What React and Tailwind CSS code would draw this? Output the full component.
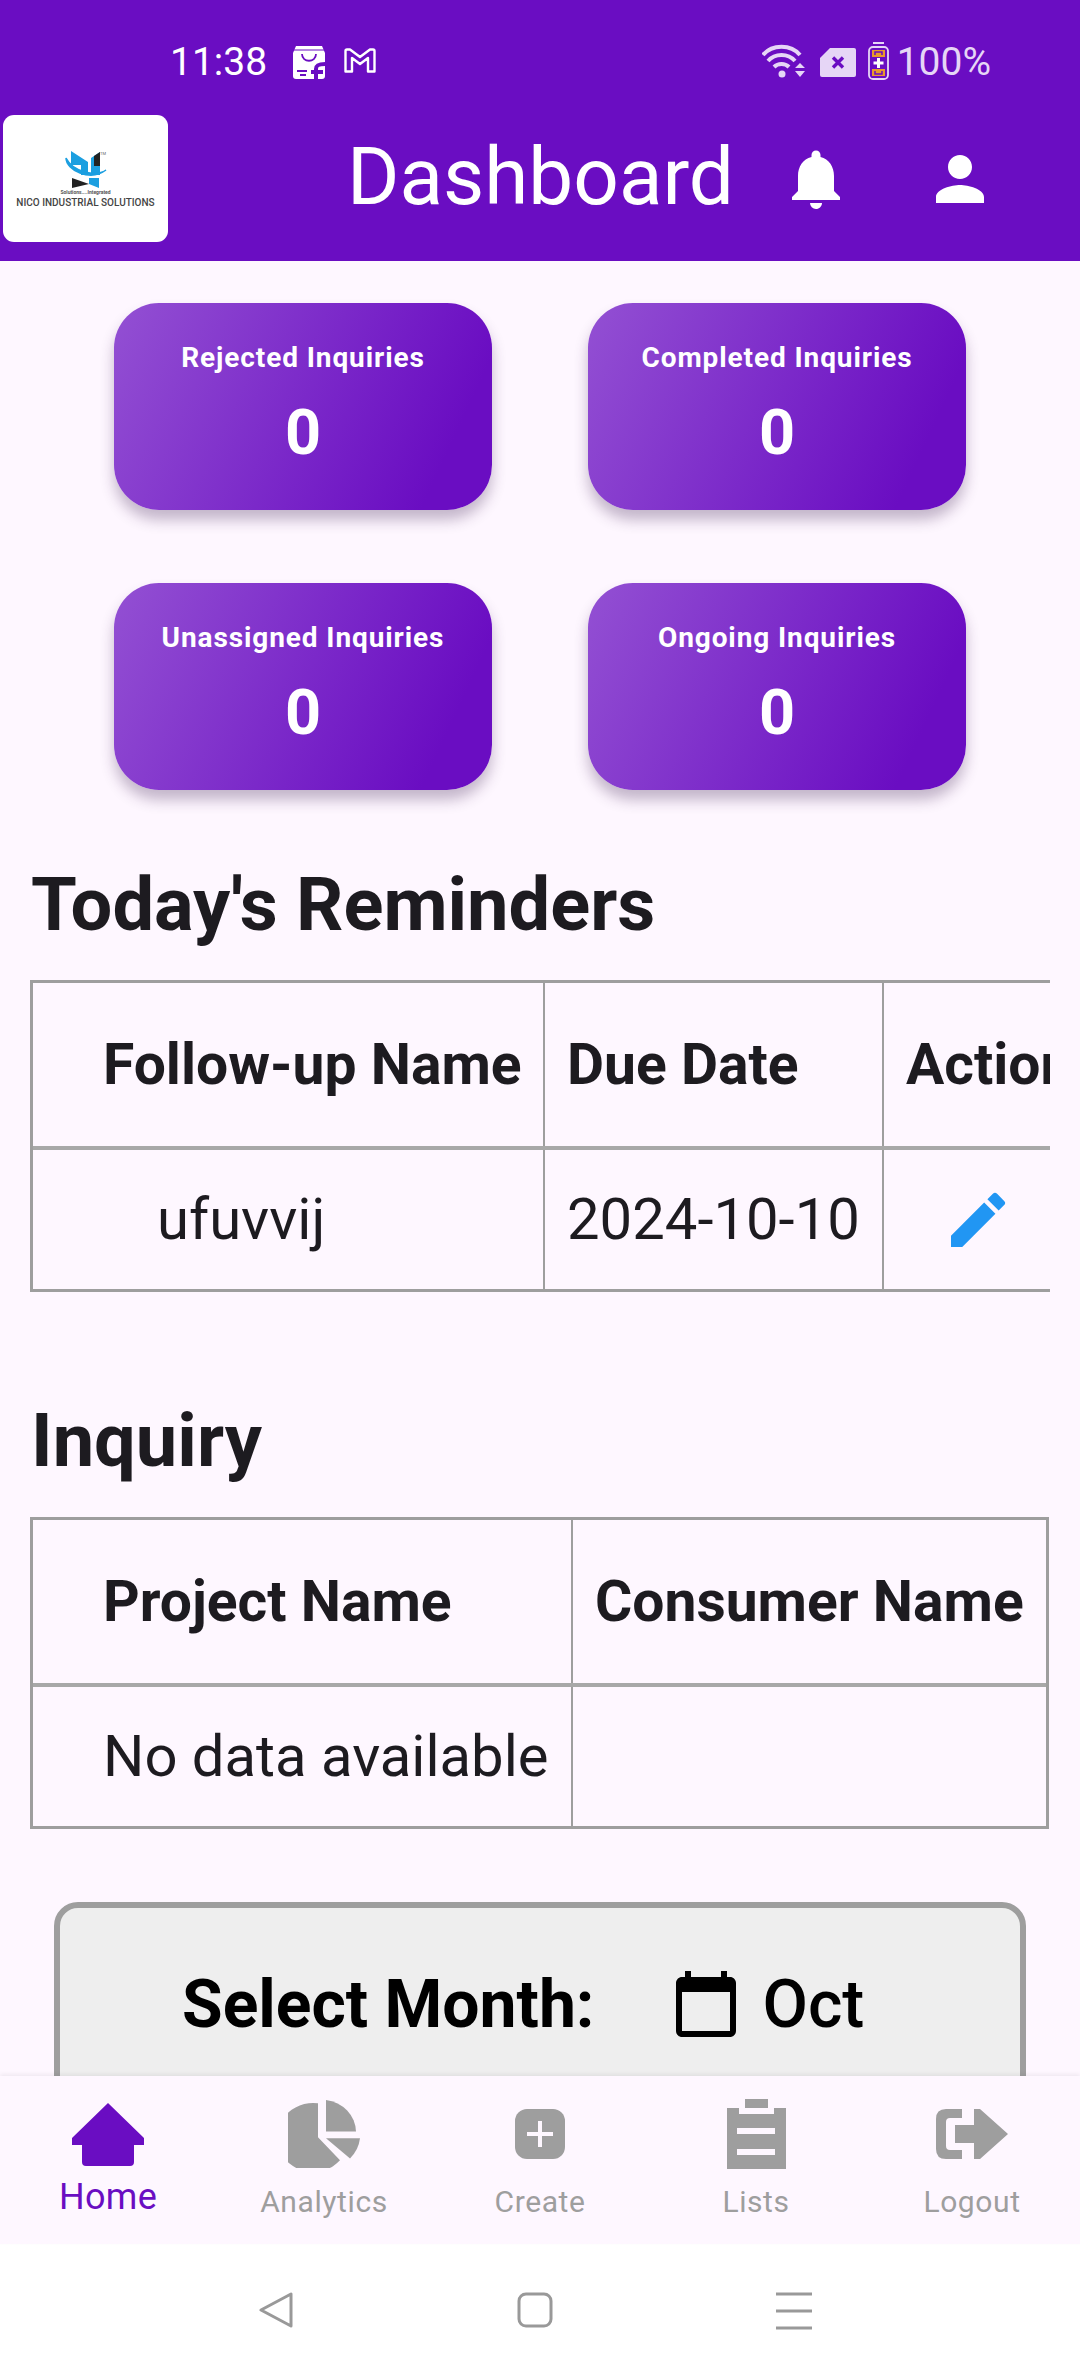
import { MdNotifications, MdPerson, MdEdit, MdCalendarToday } from "react-icons/md";

const font = { fontFamily: "Roboto, sans-serif" };

function StatCard({ label }) {
  return (
    <div className="w-[378px] h-[207px] rounded-[45px] bg-[linear-gradient(115deg,#9350d3,#6a0dc2_85%)] shadow-[0_10px_14px_rgba(60,30,80,0.3)] flex flex-col items-center pt-[37px] text-white">
      <p className="text-[28px] leading-[36px] font-bold tracking-[0.9px]">{label}</p>
      <p className="text-[63px] leading-[74px] font-bold mt-[20px]">0</p>
    </div>
  );
}

function Logo() {
  return (
    <div className="w-[165px] h-[127px] ml-[3px] bg-white rounded-[11px] flex flex-col items-center pt-[36px]">
      <svg width="44" height="38" viewBox="0 0 44 38">
        <path d="M7 0 L24 11 V24 H17 V14 H7 Z" fill="#1c9fe0" />
        <path d="M27 7 L36 1 V24 H27 Z" fill="#1c9fe0" />
        <path d="M30 5 L36 1 V15 H30 Z" fill="#222222" />
        <path d="M8 27 L25 33 L8 37 Z" fill="#222222" />
        <path d="M25 27 H35 V37 L25 33 Z" fill="#1c9fe0" />
        <path d="M2 7 C2 19 26 31 42 19 C32 26 9 21 2 7 Z" fill="#1c9fe0" stroke="#1c9fe0" strokeWidth="1.5" />
        <text x="36" y="4" fontSize="4" fill="#666666">TM</text>
      </svg>
      <p className="text-[5px] leading-[6px] text-[#555555] font-bold">Solutions....Integrated</p>
      <p className="text-[10px] leading-[13px] mt-[1px] text-[#444444] font-medium whitespace-nowrap">NICO INDUSTRIAL SOLUTIONS</p>
    </div>
  );
}

function StatusBar() {
  return (
    <div className="h-[115px] flex items-start justify-between pt-[42px] pl-[170px] pr-[89px]">
      <div className="flex items-center gap-[26px]">
        <span className="text-[39px] leading-[40px] text-white">11:38</span>
        <div className="flex items-center gap-[19px]">
          <svg width="32" height="33" viewBox="0 0 32 33">
            <path d="M3 0 H29 L32 7 V30 Q32 33 29 33 H3 Q0 33 0 30 V7 Z" fill="#fff" />
            <path d="M1 4 H31" stroke="#6a0dc2" strokeWidth="1" />
            <path d="M9 8 C9 17 23 17 23 8" fill="none" stroke="#6a0dc2" strokeWidth="1.8" />
            <path d="M4 25 H14 M7 29 H13" stroke="#6a0dc2" strokeWidth="1.8" />
            <path d="M23 33 V23 C23 19 26 18 32 18 M18 26 H30" fill="none" stroke="#6a0dc2" strokeWidth="4" />
          </svg>
          <svg width="32" height="25" viewBox="0 0 32 25" className="mt-[-3px]">
            <path d="M1.5 23.5 V3 Q1.5 1.5 3 1.5 H6 L16 9 L26 1.5 H29 Q30.5 1.5 30.5 3 V23.5 H24 V10 L16 16 L8 10 V23.5 Z" fill="none" stroke="#fff" strokeWidth="2.4" strokeLinejoin="round" />
          </svg>
        </div>
      </div>
      <div className="flex items-center text-[#e6d6f6]">
        <svg width="44" height="34" viewBox="0 0 44 34" className="mt-[-3px]">
          <path d="M1 11 C10 0 29 0 38 11" fill="none" stroke="currentColor" strokeWidth="4" />
          <path d="M6 17 C13 9 26 9 33 17" fill="none" stroke="currentColor" strokeWidth="4" />
          <path d="M12 23 C16 19 23 19 27 23" fill="none" stroke="currentColor" strokeWidth="4" />
          <circle cx="20" cy="30" r="3.5" fill="currentColor" />
          <path d="M33 24 L38 19 L43 24 Z M33 27 H43 L38 33 Z" fill="currentColor" />
        </svg>
        <svg width="36" height="29" viewBox="0 0 36 29" className="ml-[14px]">
          <path d="M10 0 H34 Q36 0 36 2 V27 Q36 29 34 29 H2 Q0 29 0 27 V10 Z" fill="currentColor" />
          <path d="M13 9.5 L23 19.5 M23 9.5 L13 19.5" stroke="#6a0dc2" strokeWidth="3.4" />
        </svg>
        <svg width="21" height="38" viewBox="0 0 21 38" className="ml-[12px] mt-[-3px]">
          <rect x="5" y="0" width="11" height="2" fill="currentColor" />
          <rect x="1" y="5" width="19" height="32" rx="4" fill="none" stroke="currentColor" strokeWidth="1.8" />
          <rect x="4" y="8" width="13" height="26" fill="#e89a2c" />
          <path d="M7 13 V10 H14 V13 M7 29 V32 H14 V29" fill="none" stroke="#6a0dc2" strokeWidth="1.5" />
          <rect x="4" y="15" width="13" height="12" fill="#6a0dc2" />
          <path d="M10.5 16 V26 M5.5 21 H15.5" stroke="#fff" strokeWidth="3" />
        </svg>
        <span className="text-[39px] leading-[40px] ml-[8px]">100%</span>
      </div>
    </div>
  );
}

function TopBar() {
  return (
    <div className="flex h-[146px] items-start">
      <Logo />
      <h1 className="text-[80px] leading-[94px] text-white ml-[179px] mt-[15px] whitespace-nowrap font-normal">Dashboard</h1>
      <div className="ml-[46px] mt-[28px] flex items-center">
        <MdNotifications className="text-white w-[72px] h-[72px]" />
        <MdPerson className="text-white w-[72px] h-[72px] ml-[72px]" />
      </div>
    </div>
  );
}

const cell = "border-[#9e9e9e] flex items-center";

function Reminders() {
  return (
    <div className="ml-[30px] w-[1020px] overflow-hidden mt-[33px]">
      <div className="w-[1200px] border-y-[3px] border-l-[3px] border-[#9e9e9e]">
        <div className="flex h-[167px] border-b-[4px] border-[#a8a8a8] text-[57px] font-bold text-[#1d1b20]">
          <div className={`${cell} w-[512px] border-r-[2px] pl-[70px]`}>Follow-up Name</div>
          <div className={`${cell} w-[339px] border-r-[2px] pl-[22px]`}>Due Date</div>
          <div className={`${cell} flex-1 pl-[22px]`}>Action</div>
        </div>
        <div className="flex h-[139px] text-[58px] text-[#1d1b20]">
          <div className={`${cell} w-[512px] border-r-[2px] pl-[124px]`}>ufuvvij</div>
          <div className={`${cell} w-[339px] border-r-[2px] pl-[22px]`}>2024-10-10</div>
          <div className={`${cell} flex-1 pl-[58px]`}>
            <MdEdit className="w-[72px] h-[72px] text-[#2196f3]" />
          </div>
        </div>
      </div>
    </div>
  );
}

function InquiryTable() {
  return (
    <div className="ml-[30px] w-[1019px] border-y-[3px] border-x-[3px] border-[#9e9e9e] mt-[34px]">
      <div className="flex h-[167px] border-b-[4px] border-[#a8a8a8] text-[57px] font-bold text-[#1d1b20]">
        <div className={`${cell} w-[540px] border-r-[2px] pl-[70px]`}>Project Name</div>
        <div className={`${cell} flex-1 pl-[22px]`}>Consumer Name</div>
      </div>
      <div className="flex h-[139px] text-[58px] text-[#1d1b20]">
        <div className={`${cell} w-[540px] border-r-[2px] pl-[70px]`}>No data available</div>
        <div className="flex-1" />
      </div>
    </div>
  );
}

function MonthCard() {
  return (
    <div className="mt-[73px] mx-[54px] h-[250px] rounded-[24px] border-[6px] border-[#9e9e9e] bg-[#eeeeee] flex items-center pb-[46px] pl-[122px] text-black">
      <span className="text-[66px] leading-[77px] font-bold">Select Month:</span>
      <MdCalendarToday className="w-[72px] h-[72px] ml-[76px]" />
      <span className="text-[66px] leading-[77px] font-medium ml-[20px]">Oct</span>
    </div>
  );
}

const navItems = [
  {
    label: "Home",
    icon: (
      <svg width="72" height="63" viewBox="0 0 72 63" fill="#6a0dc2">
        <path d="M36 0 L72 35 V42 H62 V59 Q62 63 58 63 H14 Q10 63 10 59 V42 H0 V35 Z" />
      </svg>
    ),
  },
  {
    label: "Analytics",
    icon: (
      <svg width="72" height="68" viewBox="0 0 72 71" preserveAspectRatio="none" fill="#9e9e9e">
        <path d="M30 3.5 V39 L52 63 A36 36 0 1 1 30 3.5 Z" />
        <path d="M38 0 A34 34 0 0 1 68 33 H38 Z" />
        <path d="M38 40 H72 A36 36 0 0 1 62 61 Z" />
      </svg>
    ),
  },
  {
    label: "Create",
    icon: (
      <svg width="50" height="50" viewBox="0 0 50 50">
        <rect width="50" height="50" rx="12" fill="#9e9e9e" />
        <path d="M25 12 V38 M12 25 H38" stroke="#fef7ff" strokeWidth="4" />
      </svg>
    ),
  },
  {
    label: "Lists",
    icon: (
      <svg width="59" height="70" viewBox="0 0 59 70" fill="#9e9e9e">
        <path d="M18 0 H41 V9 H18 Z" />
        <path d="M0 9 H12 V15 H47 V9 H59 V70 H0 Z" />
        <path d="M10 29 H48 V35 H10 Z M10 50 H48 V56 H10 Z" fill="#fef7ff" />
      </svg>
    ),
  },
  {
    label: "Logout",
    icon: (
      <svg width="72" height="50" viewBox="0 0 72 50" fill="#9e9e9e">
        <path d="M10 0 H26 V9 H14 Q10 9 10 13 V37 Q10 41 14 41 H26 V50 H10 Q0 50 0 40 V10 Q0 0 10 0 Z" />
        <path d="M19 16 H38 V0 H44 L72 25 L44 50 H38 V34 H19 Z" />
      </svg>
    ),
  },
];

function BottomNav() {
  return (
    <div className="h-[168px] bg-[#fef7ff] grid grid-cols-5 shrink-0 relative shadow-[0_-2px_4px_rgba(0,0,0,0.06)]">
      {navItems.map((item, i) => (
        <div key={item.label} className="flex flex-col items-center">
          <div className="h-[94px] pt-[22px] flex items-center justify-center">{item.icon}</div>
          <span className={i === 0 ? "text-[36px] leading-[42px] text-[#6a0dc2] mt-[6px] tracking-[0.3px]" : "text-[30px] leading-[36px] text-[#9e9e9e] mt-[14px] tracking-[0.6px]"}>
            {item.label}
          </span>
        </div>
      ))}
    </div>
  );
}

function SystemNav() {
  return (
    <div className="h-[132px] bg-white flex items-start justify-center gap-[223px] pt-[48px] pr-[10px] shrink-0">
      <svg width="36" height="36" viewBox="0 0 36 36" fill="none" stroke="#999999" strokeWidth="3" strokeLinejoin="round">
        <path d="M33 2 V34 L3 18 Z" />
      </svg>
      <svg width="36" height="36" viewBox="0 0 36 36" fill="none" stroke="#999999" strokeWidth="3">
        <rect x="2" y="2" width="32" height="32" rx="7" />
      </svg>
      <svg width="36" height="38" viewBox="0 0 36 38" fill="none" stroke="#999999" strokeWidth="3">
        <path d="M0 2 H36 M0 19 H36 M0 36 H36" />
      </svg>
    </div>
  );
}

export default function App() {
  return (
    <div className="w-[1080px] h-[2376px] flex flex-col bg-[#fef7ff] overflow-hidden" style={font}>
      <div className="h-[261px] bg-[#6a0dc2] shrink-0">
        <StatusBar />
        <TopBar />
      </div>
      <main className="flex-1 min-h-0 overflow-hidden">
        <div className="grid grid-cols-[378px_378px] gap-x-[96px] gap-y-[73px] justify-center pt-[42px]">
          <StatCard label="Rejected Inquiries" />
          <StatCard label="Completed Inquiries" />
          <StatCard label="Unassigned Inquiries" />
          <StatCard label="Ongoing Inquiries" />
        </div>
        <h2 className="text-[74px] leading-[84px] font-bold text-[#1d1b20] ml-[31px] mt-[73px]">Today's Reminders</h2>
        <Reminders />
        <h2 className="text-[74px] leading-[84px] font-bold text-[#1d1b20] ml-[31px] mt-[107px]">Inquiry</h2>
        <InquiryTable />
        <MonthCard />
      </main>
      <BottomNav />
      <SystemNav />
    </div>
  );
}
